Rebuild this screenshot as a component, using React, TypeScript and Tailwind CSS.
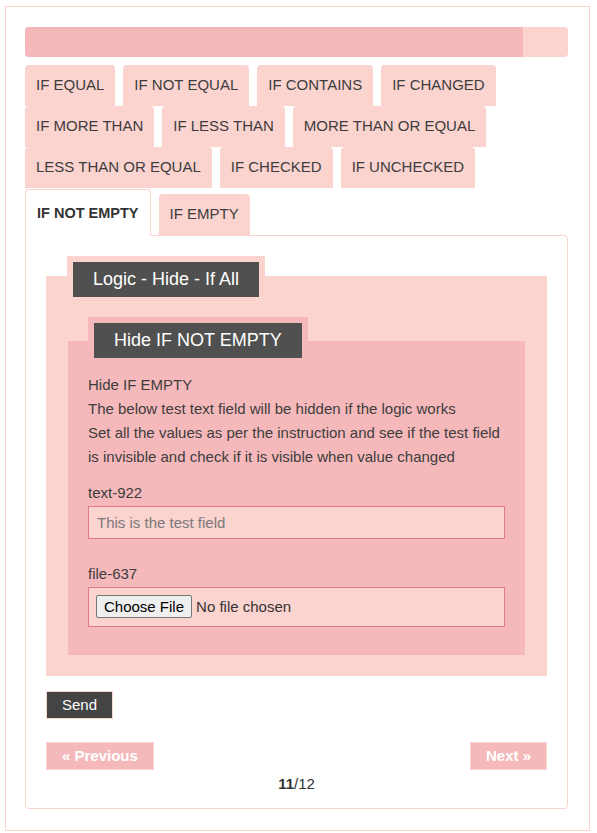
import * as React from 'react'

const conditions = [
  'IF EQUAL',
  'IF NOT EQUAL',
  'IF CONTAINS',
  'IF CHANGED',
  'IF MORE THAN',
  'IF LESS THAN',
  'MORE THAN OR EQUAL',
  'LESS THAN OR EQUAL',
  'IF CHECKED',
  'IF UNCHECKED',
  'IF NOT EMPTY',
  'IF EMPTY',
]

export default function App() {
  const [active, setActive] = React.useState('IF NOT EMPTY')
  const step = 11
  const total = 12

  return (
    <div className="min-h-[833px] bg-white font-['Liberation_Sans',Arial,sans-serif] text-[15px] text-[#333]">
      <div className="ml-[5px] mt-[6px] w-[585px] border border-[#fbd3cf] pb-[21px] pl-[19px] pr-[21px] pt-[20px]">
        {/* progress */}
        <div className="h-[30px] w-full overflow-hidden rounded-[4px] bg-[#fbd3cf]">
          <div className="h-full bg-[#f5b9bb]" style={{ width: `${(step / total) * 100}%` }} />
        </div>

        {/* tabs */}
        <div className="mt-[8px] flex flex-wrap items-end gap-x-[8px]">
          {conditions.map((c) =>
            c === active ? (
              <button
                key={c}
                onClick={() => setActive(c)}
                className="relative z-10 -mb-px mt-px h-[47px] rounded-t-[4px] border border-b-0 border-[#fbd3cf] bg-white px-[11px] pt-[2px] text-[14.5px] font-bold text-[#333]"
              >
                {c}
              </button>
            ) : (
              <button
                key={c}
                onClick={() => setActive(c)}
                className="h-[41px] rounded-t-[4px] bg-[#fbd3cf] px-[11px] text-[15px] text-[#3d3d3d]"
              >
                {c}
              </button>
            )
          )}
        </div>

        {/* panel */}
        <div className="rounded-b-[4px] rounded-tr-[4px] border border-[#fbd3cf] px-[20px] pb-[14px] pt-[40px]">
          <div className="flow-root bg-[#fbd3cf] pb-[21px] pl-[22px] pr-[22px]">
            <div className="-mt-[20px] ml-[-1px] w-fit bg-[#fbd3cf] px-[6px] pt-[6px]">
              <span className="block h-[35px] px-[20px] leading-[35px] text-[18px] text-white bg-[#505050]">
                Logic - Hide - If All
              </span>
            </div>

            <div className="mt-[44px] flow-root bg-[#f5b9bb] px-[20px] pb-[28px]">
              <div className="-mt-[24px] w-fit bg-[#f5b9bb] px-[6px] pt-[6px]">
                <span className="block h-[35px] px-[20px] leading-[35px] text-[18px] text-white bg-[#505050]">
                  Hide IF NOT EMPTY
                </span>
              </div>

              <div className="mt-[15px] leading-[24px] text-[#3d3d3d]">
                <p>Hide IF EMPTY</p>
                <p>The below test text field will be hidden if the logic works</p>
                <p>Set all the values as per the instruction and see if the test field is invisible and check if it is visible when value changed</p>
              </div>

              <label className="mt-[12px] block leading-[24px] text-[#3d3d3d]">text-922</label>
              <input
                type="text"
                placeholder="This is the test field"
                className="mt-px block h-[33px] w-full border border-[#e07c82] bg-[#fbd3cf] px-[8px] text-[15px] text-[#333] outline-none placeholder:text-[#7a7a7a]"
              />

              <label className="mt-[23px] block leading-[24px] text-[#3d3d3d]">file-637</label>
              <div className="mt-px h-[40px] border border-[#e07c82] bg-[#fbd3cf] px-[7px] pt-[7px]">
                <input
                  type="file"
                  className="text-[15px] text-[#333] file:mr-[4px] file:h-[23px] file:rounded-[2px] file:border file:border-[#767676] file:bg-[#efefef] file:px-[7px] file:text-[15px] file:text-black"
                />
              </div>
            </div>
          </div>

          <button className="mt-[15px] h-[28px] border border-[#fbd3cf] bg-[#444] px-[15px] text-[15px] text-white">
            Send
          </button>

          <div className="mt-[23px] flex justify-between">
            <button className="h-[28px] border border-[#fbd3cf] bg-[#f5b9bb] px-[15px] text-[15px] font-bold text-white">
              « Previous
            </button>
            <button className="h-[28px] border border-[#fbd3cf] bg-[#f5b9bb] px-[15px] text-[15px] font-bold text-white">
              Next »
            </button>
          </div>

          <div className="mt-[4px] text-center leading-[20px]">
            <span className="font-bold">{step}</span>/{total}
          </div>
        </div>
      </div>
    </div>
  )
}
